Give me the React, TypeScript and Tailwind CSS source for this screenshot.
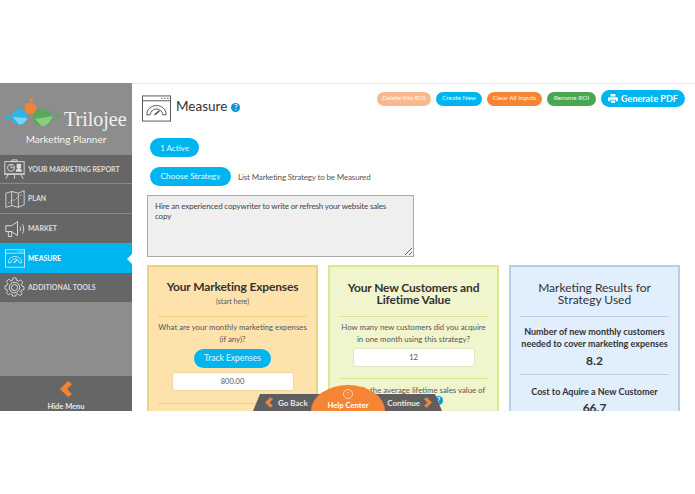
import React from 'react';

const GaugeIcon: React.FC<{ className?: string; color?: string }> = ({ className, color = '#555' }) => (
    <svg viewBox="0 0 30 27" className={className} fill="none" stroke={color} strokeWidth="1">
        <rect x="0.5" y="0.5" width="29" height="26" />
        <path d="M0.5 5.500H29.500" />
        <path d="M20 3h1.500M23 3h1.500M26 3h1.500" />
        <path d="M5 20c0-6 4.500-9.500 10-9.500s10 3.500 10 9.500h-3.500c-.5-3.500-3-6-6.500-6s-6 2.500-6.500 6z" />
        <path d="M13 20l5-4" strokeWidth="1.600" />
    </svg>
);

const ReportIcon = () => (
    <svg viewBox="0 0 24 24" className="w-[21px] h-[21px]" fill="none" stroke="#e2e2e2" strokeWidth="1">
        <rect x="1" y="3" width="22" height="14" />
        <path d="M0 17.500h24M5 17.500l-3 5M19 17.500l3 5M12 17.500v5M9 1h6v2H9z" />
        <circle cx="8" cy="10" r="4" />
        <path d="M8 6.500V10h3.500" />
        <rect x="15" y="6" width="4" height="4" fill="#e2e2e2" />
        <path d="M14 14c0-2 1-3 3-3s3 1 3 3z" fill="#e2e2e2" />
    </svg>
);

const MapIcon = () => (
    <svg viewBox="0 0 24 24" className="w-[20px] h-[20px]" fill="none" stroke="#e2e2e2" strokeWidth="1">
        <path d="M1 5l7-2 8 2 7-3v17l-7 3-8-2-7 2z" />
        <path d="M8 3v17M16 5v17" />
        <path d="M4 17l3-3 5-1 4-4 4-2" strokeDasharray="2 1.500" />
    </svg>
);

const MegaphoneIcon = () => (
    <svg viewBox="0 0 24 24" className="w-[20px] h-[20px]" fill="none" stroke="#e2e2e2" strokeWidth="1.100">
        <path d="M1 8h7l7-5v17l-7-5H1z" />
        <path d="M4 15v6h4v-6" />
        <path d="M18 9c1 1.500 1 4 0 5.500M21 6.500c2 3 2 8 0 11" />
    </svg>
);

const GearIcon = () => (
    <svg viewBox="0 0 24 24" className="w-[21px] h-[21px]" fill="none" stroke="#e2e2e2" strokeWidth="1.100">
        <path d="M10 1h4l.6 3 2.400 1 2.600-1.600 2.800 2.800L20.800 9l1 2.400 2.200.6v4l-3 .4-1 2.400 1.600 2.400-2.800 2.400L16.400 21l-2.400 1-.4 2h-4l-.4-2-2.400-1-2.400 1.200-2.800-2.400L3.200 18l-1-2.400L0 15v-4l2.400-.6 1-2.400L2 5.200l2.800-2.800L7.400 5l2.200-1z" transform="translate(1.200 .2) scale(.9)" />
        <circle cx="12" cy="12" r="6" />
        <circle cx="12" cy="12" r="3.500" />
    </svg>
);

const Chevron: React.FC<{ dir: 'left' | 'right'; className?: string }> = ({ dir, className }) => (
    <svg viewBox="0 0 12 16" className={className}>
        <path d={dir === 'left' ? 'M8 0l4 3-5 5 5 5-4 3-8-8z' : 'M4 0l-4 3 5 5-5 5 4 3 8-8z'} fill="#ee8436" />
    </svg>
);

const Logo = () => (
    <div className="flex items-start pt-[14px] pl-[4px]">
        <svg viewBox="0 0 60 32" className="w-[60px] h-[32px] shrink-0">
            <circle cx="3.500" cy="20.500" r="2.300" fill="#1eb6e6" />
            <ellipse cx="15.500" cy="20" rx="8" ry="7.800" fill="#2cb5e8" />
            <path d="M9 20l14.500 1c-2 4-5 6.500-8.500 6.500z" fill="#7fd5f1" />
            <circle cx="27" cy="3" r="1.900" fill="#ee8436" />
            <circle cx="26.500" cy="11.500" r="6" fill="#ee8436" />
            <ellipse cx="38.500" cy="20.500" rx="10" ry="9" fill="#58a95c" />
            <path d="M31 22l17.500-3c-1.500 6-6 10-10.500 10.500z" fill="#8ccb83" />
            <circle cx="54" cy="18.500" r="2.300" fill="#58a95c" />
        </svg>
        <span className="font-['Liberation_Serif',serif] text-[#f2f2f2] text-[20px] leading-none mt-[12px]">Trilojee</span>
    </div>
);

const navItems: { label: string; icon: React.ReactNode; active?: boolean; h: string }[] = [
    { label: 'YOUR MARKETING REPORT', icon: <ReportIcon />, h: 'h-[29px]' },
    { label: 'PLAN', icon: <MapIcon />, h: 'h-[30px]' },
    { label: 'MARKET', icon: <MegaphoneIcon />, h: 'h-[30px]' },
    { label: 'MEASURE', icon: <GaugeIcon className="w-[20px] h-[19px]" color="#ffffff" />, active: true, h: 'h-[29px]' },
    { label: 'ADDITIONAL TOOLS', icon: <GearIcon />, h: 'h-[30px]' },
];

const Sidebar = () => (
    <aside className="w-[132px] shrink-0 bg-[#8d8d8d] flex flex-col">
        <div className="h-[72px] shrink-0">
            <Logo />
            <p className="text-center text-[#f4f4f4] text-[10px] leading-none mt-[5px]">Marketing Planner</p>
        </div>
        <nav className="flex flex-col">
            {navItems.map((item) => (
                <div
                    key={item.label}
                    className={`relative flex items-center gap-[3px] pl-[4px] border-b ${item.h} ${
                        item.active ? 'bg-[#00b5ef] border-[#00b5ef] text-white' : 'bg-[#666666] border-[#8a8a8a] text-[#dcdcdc]'
                    }`}
                >
                    <span className="w-[21px] flex justify-center">{item.icon}</span>
                    <span className="text-[7px] font-bold whitespace-nowrap">{item.label}</span>
                    {item.active && (
                        <span className="absolute right-0 top-[10px] w-0 h-0 border-y-[5px] border-y-transparent border-r-[5px] border-r-white" />
                    )}
                </div>
            ))}
        </nav>
        <div className="flex-1" />
        <div className="h-[35px] shrink-0 bg-[#666666] flex flex-col items-center pt-[5px]">
            <Chevron dir="left" className="w-[12px] h-[16px]" />
            <span className="text-[#e8e8e8] text-[7.500px] font-bold leading-none mt-[6px]">Hide Menu</span>
        </div>
    </aside>
);

const Pill: React.FC<{ label: string; color: string; w: string }> = ({ label, color, w }) => (
    <button className={`h-[14px] rounded-full text-[6.500px] leading-none text-white/90 whitespace-nowrap ${w} ${color}`}>{label}</button>
);

const Rule: React.FC<{ color: string }> = ({ color }) => <div className={`h-px mx-[9px] ${color}`} />;

const Field: React.FC<{ value: string }> = ({ value }) => (
    <div className="mx-auto w-[120px] h-[17px] bg-white rounded-[2px] shadow-[0_0_2px_rgba(0,0,0,0.2)] flex items-center justify-center text-[7.500px] text-[#555]">
        {value}
    </div>
);

const HelpDot: React.FC<{ className?: string }> = ({ className }) => (
    <span className={`w-[9px] h-[9px] rounded-full bg-[#1193d4] text-white text-[7px] font-bold leading-none flex items-center justify-center ${className ?? ''}`}>?</span>
);

const ExpensesCard = () => (
    <section className="w-[171px] h-[160px] shrink-0 bg-[#fde3ab] border-2 border-[#ecd382] text-center">
        <h2 className="text-[12px] font-bold tracking-[-0.15px] text-[#333] leading-none mt-[14px]">Your Marketing Expenses</h2>
        <p className="text-[7px] leading-[7px] mt-[5px] text-[#555]">(start here)</p>
        <div className="mt-[11px]"><Rule color="bg-[#efcf7c]" /></div>
        <p className="text-[7.800px] leading-[12px] mt-[4px] text-[#555]">What are your monthly marketing expenses<br />(if any)?</p>
        <button className="block mx-auto mt-[4px] w-[77px] h-[19px] rounded-full bg-[#00b5ef] text-white/90 text-[8.500px] leading-none">Track Expenses</button>
        <div className="mt-[5px]"><Field value="800.00" /></div>
        <div className="mt-[13px]"><Rule color="bg-[#efcf7c]" /></div>
    </section>
);

const CustomersCard = () => (
    <section className="w-[171px] h-[160px] shrink-0 bg-[#f0f5cd] border-2 border-[#dde88e] text-center">
        <h2 className="text-[12px] font-bold tracking-[-0.15px] text-[#333] leading-[12px] mt-[15px]">Your New Customers and<br />Lifetime Value</h2>
        <div className="mt-[10px]"><Rule color="bg-[#dbe48f]" /></div>
        <p className="text-[7.800px] leading-[12px] mt-[4px] text-[#555]">How many new customers did you acquire<br />in one month using this strategy?</p>
        <div className="mt-[4px]"><Field value="12" /></div>
        <div className="mt-[12px]"><Rule color="bg-[#dbe48f]" /></div>
        <p className="text-[7.800px] leading-[12px] mt-[5px] text-[#555]">What is the average lifetime sales value of</p>
        <div className="flex justify-end pr-[54px]"><HelpDot /></div>
    </section>
);

const ResultsCard = () => (
    <section className="w-[171px] h-[160px] shrink-0 bg-[#e1eefb] border-2 border-[#b5cfe8] text-center text-[#333]">
        <h2 className="text-[12px] leading-[12px] mt-[15px]">Marketing Results for<br />Strategy Used</h2>
        <div className="mt-[10px]"><Rule color="bg-[#b9cfe4]" /></div>
        <p className="text-[9px] font-bold leading-[12px] mt-[9px]">Number of new monthly customers<br />needed to cover marketing expenses</p>
        <p className="text-[12px] font-bold leading-none mt-[5px]">8.2</p>
        <div className="mt-[7px]"><Rule color="bg-[#b9cfe4]" /></div>
        <p className="text-[9px] font-bold leading-none mt-[12px]">Cost to Aquire a New Customer</p>
        <p className="text-[12px] font-bold leading-none mt-[6px]">66.7</p>
    </section>
);

const Content = () => (
    <main className="flex-1 min-w-0 flex flex-col overflow-hidden bg-white border-t border-[#ececec]">
        <header className="h-[45px] shrink-0 flex items-start justify-between px-[10px]">
            <div className="flex items-center pt-[11px]">
                <GaugeIcon className="w-[29px] h-[27px]" />
                <h1 className="text-[13.500px] text-[#333] leading-none ml-[5px] -mt-[3px]">Measure</h1>
                <HelpDot className="ml-[4px] -mt-[2px]" />
            </div>
            <div className="flex items-center gap-[5px] pt-[6px]">
                <Pill label="Delete this ROI" color="bg-[#f9b98e]" w="w-[54px]" />
                <Pill label="Create New" color="bg-[#00b5ef]" w="w-[46px]" />
                <Pill label="Clear All Inputs" color="bg-[#f58534]" w="w-[55px]" />
                <Pill label="Rename ROI" color="bg-[#4aa64f]" w="w-[49px]" />
                <button className="h-[17px] w-[84px] rounded-full bg-[#00b5ef] text-white text-[9px] font-bold leading-none flex items-center justify-center gap-[3px]">
                    <svg viewBox="0 0 12 11" className="w-[10px] h-[9px]" fill="#fff"><path d="M3 0h6v3H3zM0 4h12v5H9.500V7h-7v2H0zM3.500 8h5v3h-5z" /></svg>
                    Generate PDF
                </button>
            </div>
        </header>
        <div className="flex flex-col px-[15px] pt-[9px] items-start">
            <button className="ml-[3px] w-[49px] h-[19px] rounded-full bg-[#00b5ef] text-white/90 text-[8px] leading-none">1 Active</button>
            <div className="flex items-center ml-[3px] mt-[10px]">
                <button className="w-[81px] h-[19px] rounded-full bg-[#00b5ef] text-white/90 text-[8.300px] leading-none">Choose Strategy</button>
                <span className="ml-[7px] text-[8px] tracking-[-0.15px] text-[#555]">List Marketing Strategy to be Measured</span>
            </div>
            <textarea
                readOnly
                defaultValue="Hire an experienced copywriter to write or refresh your website sales copy"
                className="block mt-[9px] w-[267px] h-[62px] bg-[#efefef] border border-[#a9a9a9] pl-[7px] pr-[20px] pt-[5px] text-[8px] tracking-[-0.15px] leading-[10px] text-[#444] outline-none"
            />
            <div className="mt-[8px] flex gap-[10px]">
                <ExpensesCard />
                <CustomersCard />
                <ResultsCard />
            </div>
        </div>
    </main>
);

const FooterNav = () => (
    <div className="absolute left-[253px] bottom-0 w-[189px] h-[26px] flex items-end">
        <div className="absolute left-0 bottom-0 w-full h-[17px] bg-[#5f5f5f] [clip-path:polygon(7px_0,182px_0,100%_100%,0_100%)] flex items-center justify-between pl-[12px] pr-[10px] text-[8px] font-bold text-[#e8e8e8]">
            <span className="flex items-center gap-[5px]"><Chevron dir="left" className="w-[8px] h-[11px]" />Go Back</span>
            <span className="flex items-center gap-[4px]">Continue<Chevron dir="right" className="w-[8px] h-[11px]" /></span>
        </div>
        <div className="absolute left-[58px] bottom-0 w-[74px] h-[26px] bg-[#f58534] [border-radius:37px_37px_0_0/26px_26px_0_0] flex flex-col items-center pt-[4px] text-[#fff]">
            <span className="w-[10px] h-[10px] rounded-full border border-[#fbd2a8] text-[#fbd2a8] text-[6.500px] leading-none flex items-center justify-center">?</span>
            <span className="text-[7.700px] font-bold leading-none mt-[3px]">Help Center</span>
        </div>
    </div>
);

export default function App() {
    return (
        <div className="w-[695px] h-[494px] bg-white overflow-hidden flex flex-col font-['Lato','Noto_Sans',sans-serif]">
            <div className="h-[83px] shrink-0" />
            <div className="relative h-[328px] shrink-0 flex overflow-hidden">
                <Sidebar />
                <Content />
                <FooterNav />
            </div>
        </div>
    );
}
